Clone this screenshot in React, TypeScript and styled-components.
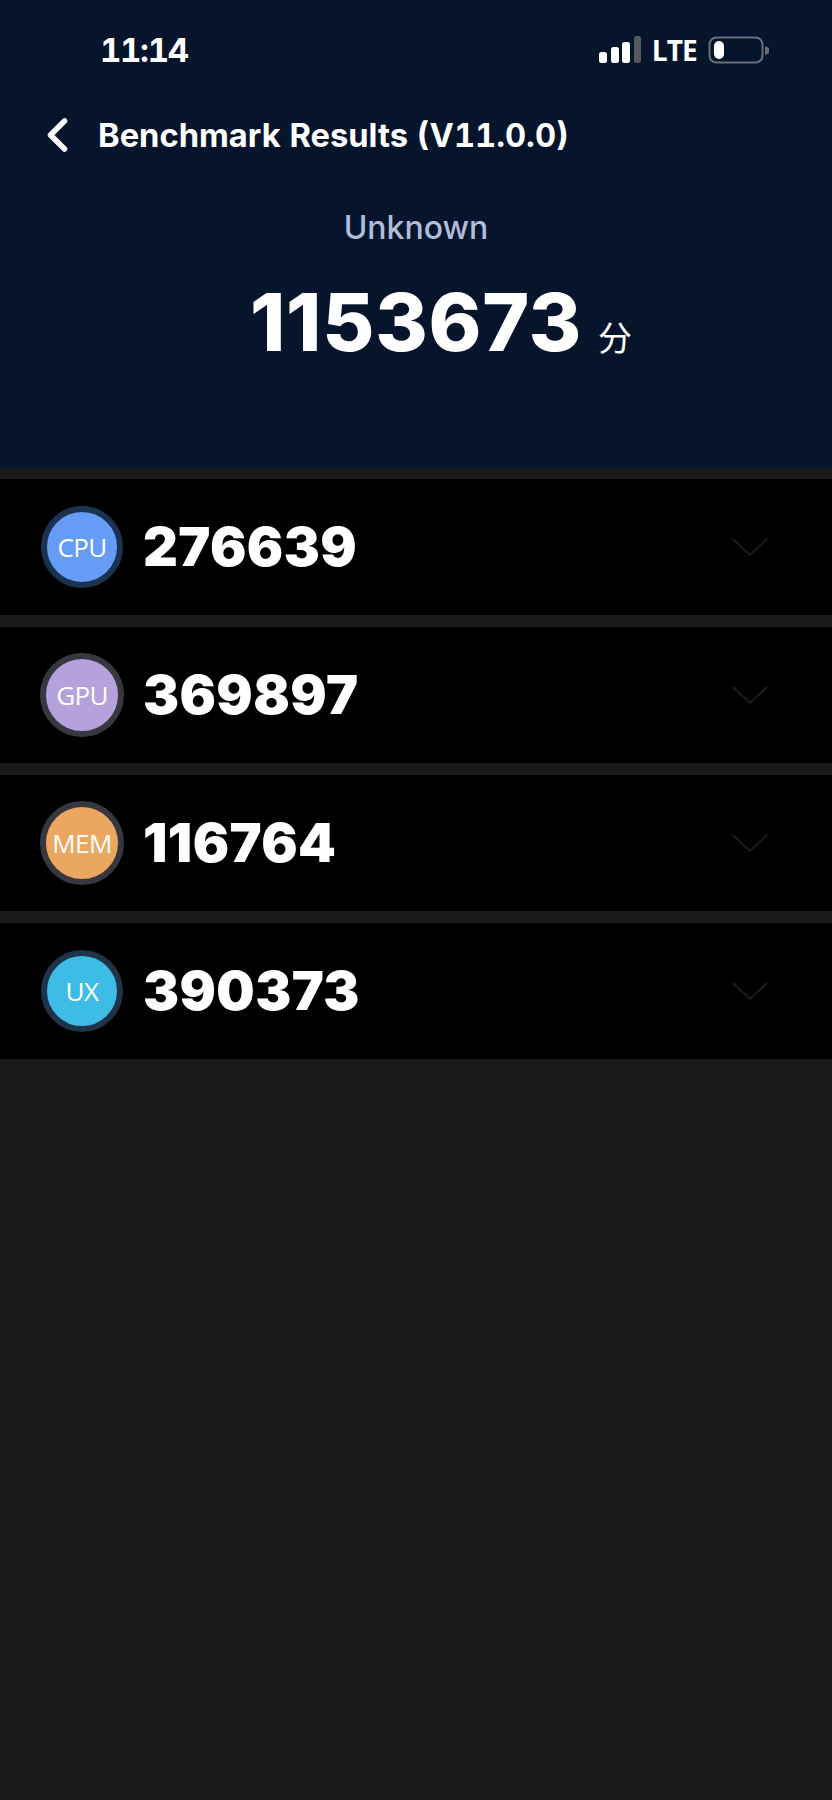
import React from "react";
import styled, { createGlobalStyle } from "styled-components";

const GlobalStyle = createGlobalStyle`
  html, body {
    margin: 0;
    padding: 0;
    background: #191919;
  }
  body {
    font-family: Inter, "Noto Sans", sans-serif;
  }
`;

const SCORES = [
  { label: "CPU", value: "276639", color: "#659cf5", ring: "#1b3350", size: 82 },
  { label: "GPU", value: "369897", color: "#b5a2dc", ring: "#37383f", size: 84 },
  { label: "MEM", value: "116764", color: "#eba660", ring: "#37383f", size: 84 },
  { label: "UX", value: "390373", color: "#3dbce6", ring: "#1f3349", size: 82 },
];

const Page = styled.div`
  width: 832px;
  min-height: 1800px;
  background: #191919;
  overflow: hidden;
`;

const Header = styled.header`
  height: 468px;
  background: #06152c;
  color: #fff;
  box-sizing: border-box;
  padding-top: 30px;
`;

const StatusBar = styled.div`
  height: 40px;
  padding: 0 63px 0 100px;
  display: flex;
  align-items: center;
  justify-content: space-between;
`;

const Time = styled.span`
  font-size: 33px;
  font-weight: 700;
  line-height: 40px;
  font-variant-numeric: tabular-nums;
  letter-spacing: -1.3px;
`;

const StatusIcons = styled.div`
  display: flex;
  align-items: center;
  gap: 11px;
`;

const Lte = styled.span`
  font-family: "Open Sans", sans-serif;
  font-size: 28px;
  font-weight: 700;
  line-height: 40px;
  letter-spacing: -0.8px;
`;

const TitleBar = styled.div`
  margin-top: 45px;
  height: 40px;
  padding-left: 46px;
  display: flex;
  align-items: center;
  gap: 30px;
`;

const Title = styled.h1`
  margin: 0;
  font-size: 32.7px;
  font-weight: 700;
  line-height: 40px;
  font-variant-numeric: tabular-nums;
`;

const DeviceName = styled.div`
  margin-top: 53px;
  text-align: center;
  font-size: 32px;
  font-weight: 500;
  line-height: 40px;
  color: #b0bcd8;
`;

const TotalRow = styled.div`
  margin-top: 29px;
  padding-left: 250px;
  display: flex;
  align-items: baseline;
  gap: 16px;
`;

const Total = styled.span`
  font-size: 80px;
  font-weight: 800;
  line-height: 90px;
  letter-spacing: 0.8px;
`;

const Unit = styled.span`
  font-family: "Noto Sans CJK SC", sans-serif;
  font-size: 34px;
  font-weight: 400;
`;

const ScoreList = styled.section`
  margin-top: 11px;
  display: flex;
  flex-direction: column;
  gap: 12px;
`;

const ScoreRow = styled.div`
  height: 136px;
  background: #000;
  display: flex;
  align-items: center;
  padding: 0 63px 0 0;
`;

const BadgeSlot = styled.div`
  width: 143px;
  padding-left: 40px;
  padding-right: 19px;
  box-sizing: border-box;
  display: flex;
  justify-content: center;
`;

const Badge = styled.div<{ $color: string; $ring: string; $size: number }>`
  width: ${(p) => p.$size}px;
  height: ${(p) => p.$size}px;
  box-sizing: border-box;
  flex: none;
  border-radius: 50%;
  border: 6px solid ${(p) => p.$ring};
  background: ${(p) => p.$color};
  color: #fff;
  display: flex;
  align-items: center;
  justify-content: center;
  font-family: "Open Sans", sans-serif;
  font-size: 26px;
  font-weight: 400;
  letter-spacing: -0.6px;
`;

const ScoreValue = styled.span`
  flex: 1;
  color: #fff;
  font-size: 54px;
  font-weight: 900;
  line-height: 60px;
  letter-spacing: 0.4px;
`;

const Chevron = () => (
  <svg width="38" height="20" viewBox="0 0 38 20" fill="none">
    <path d="M2 2 L19 18 L36 2" stroke="#1c1c26" strokeWidth="2" />
  </svg>
);

const BackArrow = () => (
  <svg width="22" height="36" viewBox="0 0 22 36" fill="none">
    <path
      d="M18.5 4 L4.5 18 L18.5 32"
      stroke="#fff"
      strokeWidth="5.5"
      strokeLinecap="round"
      strokeLinejoin="round"
    />
  </svg>
);

const SignalBars = () => (
  <svg width="42" height="28" viewBox="0 0 42 28">
    <rect x="0" y="16" width="8" height="11" rx="2.5" fill="#fff" />
    <rect x="12" y="11" width="8" height="16" rx="2.5" fill="#fff" />
    <rect x="23" y="6" width="8" height="21" rx="2.5" fill="#fff" />
    <rect x="35" y="0" width="7" height="27" rx="2.5" fill="#55595f" />
  </svg>
);

const Battery = () => (
  <svg width="61" height="28" viewBox="0 0 61 28">
    <rect x="1.5" y="1.5" width="53" height="25" rx="7" fill="none" stroke="#6b6f78" strokeWidth="2" />
    <rect x="6" y="5" width="10" height="18" rx="5" fill="#fff" />
    <path d="M57 10 L61 12 V17 L57 19 Z" fill="#6b6f78" />
  </svg>
);

export default function App() {
  return (
    <Page>
      <GlobalStyle />
      <Header>
        <StatusBar>
          <Time>11:14</Time>
          <StatusIcons>
            <SignalBars />
            <Lte>LTE</Lte>
            <Battery />
          </StatusIcons>
        </StatusBar>
        <TitleBar>
          <BackArrow />
          <Title>Benchmark Results (V11.0.0)</Title>
        </TitleBar>
        <DeviceName>Unknown</DeviceName>
        <TotalRow>
          <Total>1153673</Total>
          <Unit>分</Unit>
        </TotalRow>
      </Header>
      <ScoreList>
        {SCORES.map((s) => (
          <ScoreRow key={s.label}>
            <BadgeSlot>
              <Badge $color={s.color} $ring={s.ring} $size={s.size}>
                {s.label}
              </Badge>
            </BadgeSlot>
            <ScoreValue>{s.value}</ScoreValue>
            <Chevron />
          </ScoreRow>
        ))}
      </ScoreList>
    </Page>
  );
}
